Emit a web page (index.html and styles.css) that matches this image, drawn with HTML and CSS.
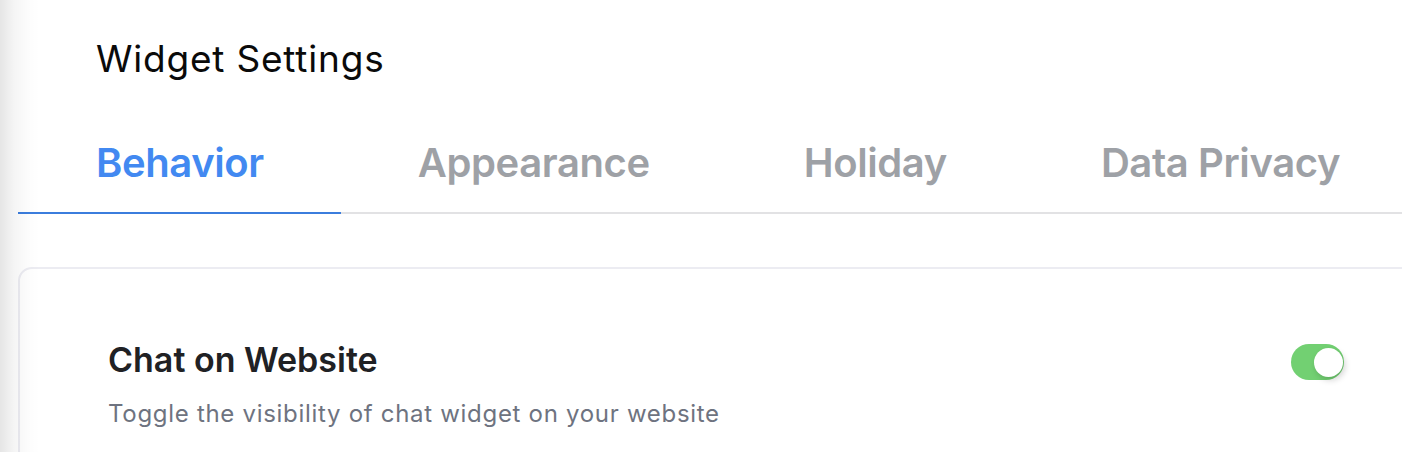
FILE: index.html
```html
<!DOCTYPE html>
<html lang="en">
<head>
<meta charset="utf-8">
<title>Widget Settings</title>
<link rel="stylesheet" href="styles.css">
</head>
<body>
<div class="page">
  <h1 class="title">Widget Settings</h1>
  <nav class="tabs">
    <a class="tab active">Behavior</a>
    <a class="tab">Appearance</a>
    <a class="tab">Holiday</a>
    <a class="tab">Data Privacy</a>
  </nav>
  <section class="card">
    <div class="setting">
      <div class="setting-text">
        <h2 class="setting-title">Chat on Website</h2>
        <p class="setting-desc">Toggle the visibility of chat widget on your website</p>
      </div>
      <span class="switch on"><span class="knob"></span></span>
    </div>
  </section>
</div>
<div class="edge-shadow"></div>
</body>
</html>
```

FILE: styles.css
```css
html, body {
  margin: 0;
  padding: 0;
  background: #ffffff;
  overflow: hidden;
}
body {
  font-family: "Inter", "Noto Sans", sans-serif;
  width: 1402px;
  height: 452px;
  position: relative;
}
.page {
  padding-left: 18px;
}
.title {
  margin: 0;
  padding: 36px 0 0 78px;
  font-size: 37px;
  font-weight: 400;
  line-height: normal;
  color: #0a0a0a;
  letter-spacing: 0.8px;
}
.tabs {
  display: flex;
  margin-top: 57px;
  border-bottom: 2px solid #e2e2e4;
}
.tab {
  padding: 0 77px 25px;
  margin-bottom: -2px;
  border-bottom: 2px solid transparent;
  font-size: 40px;
  font-weight: 600;
  line-height: normal;
  letter-spacing: -0.4px;
  color: #9ea1a6;
  white-space: nowrap;
}
.tab.active {
  padding-left: 78px;
  color: #4289f1;
  border-bottom-color: #3b7ddd;
}
.card {
  margin-top: 53px;
  margin-right: -32px;
  border: 2px solid #ececf2;
  border-radius: 14px;
  padding: 70px 88px 0;
  height: 130px;
}
.setting {
  display: flex;
  justify-content: space-between;
  align-items: flex-start;
}
.setting-title {
  margin: 0;
  font-size: 34px;
  font-weight: 600;
  line-height: normal;
  color: #202124;
}
.setting-desc {
  margin: 19px 0 0;
  font-size: 24px;
  font-weight: 400;
  line-height: normal;
  letter-spacing: 0.7px;
  color: #6e7380;
}
.switch {
  margin-top: 5px;
  width: 53px;
  height: 36px;
  border-radius: 18px;
  background: #72d072;
  display: flex;
  align-items: center;
  justify-content: flex-end;
  padding: 0 1px;
  box-sizing: border-box;
}
.knob {
  width: 29px;
  height: 29px;
  border-radius: 50%;
  background: #ffffff;
  box-shadow: 2px 3px 6px rgba(0, 0, 0, 0.18);
}
.edge-shadow {
  position: absolute;
  left: 0;
  top: 0;
  bottom: 0;
  width: 40px;
  pointer-events: none;
  background: linear-gradient(to right, rgba(0,0,0,0.1), rgba(0,0,0,0.04) 14px, rgba(0,0,0,0.01) 28px, rgba(0,0,0,0) 40px);
}
```
